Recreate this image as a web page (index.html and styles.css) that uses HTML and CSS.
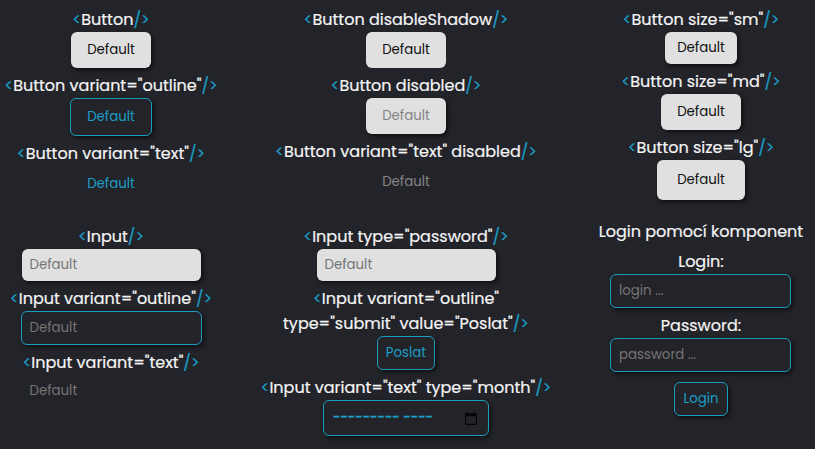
FILE: index.html
```html
<!DOCTYPE html>
<html lang="cs">
<head>
<meta charset="utf-8">
<title>Komponenty</title>
<link rel="stylesheet" href="styles.css">
</head>
<body>
<main class="showcase">
  <section class="group">
    <p class="label"><i>&lt;</i>Button<i>/&gt;</i></p>
    <button class="btn">Default</button>
    <p class="label"><i>&lt;</i>Button variant="outline"<i>/&gt;</i></p>
    <button class="btn outline">Default</button>
    <p class="label"><i>&lt;</i>Button variant="text"<i>/&gt;</i></p>
    <button class="btn text">Default</button>
  </section>
  <section class="group">
    <p class="label"><i>&lt;</i>Button disableShadow<i>/&gt;</i></p>
    <button class="btn flat">Default</button>
    <p class="label"><i>&lt;</i>Button disabled<i>/&gt;</i></p>
    <button class="btn" disabled>Default</button>
    <p class="label"><i>&lt;</i>Button variant="text" disabled<i>/&gt;</i></p>
    <button class="btn text" disabled>Default</button>
  </section>
  <section class="group">
    <p class="label"><i>&lt;</i>Button size="sm"<i>/&gt;</i></p>
    <button class="btn sm">Default</button>
    <p class="label"><i>&lt;</i>Button size="md"<i>/&gt;</i></p>
    <button class="btn">Default</button>
    <p class="label"><i>&lt;</i>Button size="lg"<i>/&gt;</i></p>
    <button class="btn lg">Default</button>
  </section>
  <section class="group">
    <p class="label"><i>&lt;</i>Input<i>/&gt;</i></p>
    <input class="field" placeholder="Default">
    <p class="label"><i>&lt;</i>Input variant="outline"<i>/&gt;</i></p>
    <input class="field outline" placeholder="Default">
    <p class="label"><i>&lt;</i>Input variant="text"<i>/&gt;</i></p>
    <input class="field text" placeholder="Default">
  </section>
  <section class="group">
    <p class="label"><i>&lt;</i>Input type="password"<i>/&gt;</i></p>
    <input class="field" type="password" placeholder="Default">
    <p class="label"><i>&lt;</i>Input variant="outline"<br>type="submit" value="Poslat"<i>/&gt;</i></p>
    <input class="btn outline submit" type="submit" value="Poslat">
    <p class="label"><i>&lt;</i>Input variant="text" type="month"<i>/&gt;</i></p>
    <div class="month"><span>--------- ----</span>
      <svg width="12" height="13" viewBox="0 0 12 13"><path fill="#050505" fill-rule="evenodd" d="M2 0h1.300v1.300h5.400V0H10v1.300h.8q1.200 0 1.200 1.200v9.200q0 1.200-1.200 1.200H1.200Q0 12.900 0 11.700V2.500Q0 1.300 1.200 1.300H2zM1.200 4.300v7.400h9.600V4.300z"/></svg>
    </div>
  </section>
  <section class="group login">
    <h2 class="label">Login pomocí komponent</h2>
    <label class="label">Login:</label>
    <input class="field outline" placeholder="login ...">
    <label class="label">Password:</label>
    <input class="field outline" type="password" placeholder="password ...">
    <input class="btn outline submit enter" type="submit" value="Login">
  </section>
</main>
</body>
</html>
```
FILE: styles.css
```css
* { box-sizing: border-box; }
body {
  margin: 0;
  height: 449px;
  overflow: hidden;
  background: #23242a;
  color: #f5f5f5;
  font: 16px/25px Poppins, Inter, sans-serif;
}
.showcase {
  display: grid;
  grid-template-columns: 222px 368px 222px;
  grid-template-rows: 217px 232px;
}
.group {
  display: flex;
  flex-direction: column;
  align-items: center;
  padding-top: 2px;
}
.label {
  margin: 5px 0 0;
  font: inherit;
  white-space: nowrap;
  text-align: center;
  -webkit-text-stroke: .2px;
}
.label i {
  font-style: normal;
  color: #1b9dc6;
}
.btn, .field, .month {
  flex: none;
  border: 0;
  border-radius: 6px;
  font: 13.333px/20px Poppins, Inter, sans-serif;
  box-shadow: 2px 2px 4px rgba(0, 0, 0, .6);
  background: #e0e0e0;
  color: #111;
}
.btn { width: 80px; height: 36px; padding: 0; }
.sm { width: 72px; height: 32px; }
.lg { width: 88px; height: 40px; }
.outline, .month {
  border: 1px solid #1b9dbe;
  background: transparent;
  color: #1b9dc6;
}
.btn.outline { width: 82px; height: 38px; }
.flat, .btn.text, .field.text { box-shadow: none; }
.text { background: transparent; color: #1b9dc6; }
.btn:disabled { color: #858585; }
.field { width: 179px; height: 32px; padding: 0 8px; }
.field.outline { width: 181px; height: 34px; }
.login .field { margin-right: 1px; }
.field::placeholder { color: #757575; opacity: 1; }
.btn.submit { width: 58px; height: 34px; }
.btn.enter { width: 54px; margin-top: 10px; }
.month {
  display: flex;
  align-items: center;
  justify-content: space-between;
  width: 166px;
  height: 36px;
  padding: 0 11px 0 9px;
}
.month span {
  -webkit-text-stroke: .5px;
  letter-spacing: .07px;
}
.login { margin-top: -5px; }
```
